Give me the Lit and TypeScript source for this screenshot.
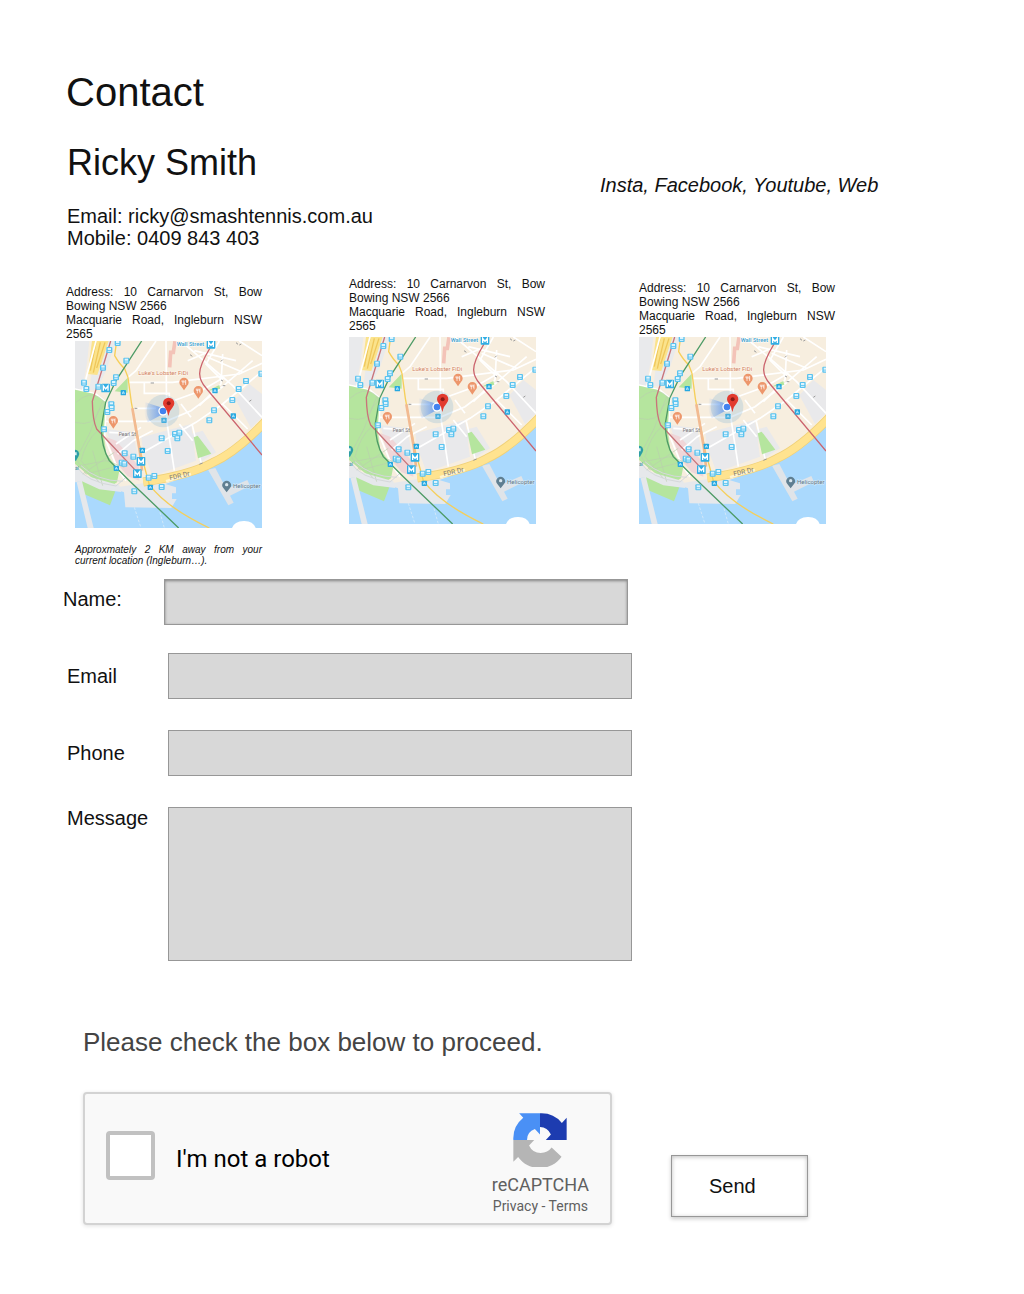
import { LitElement, html, svg, css } from "lit";
import { customElement, property } from "lit/decorators.js";

const transit: [number, number][] = [
  [185, 207], [160, 228], [211, 260], [141, 281], [84, 326], [91, 345], [127, 338], [180, 310],
  [173, 327], [166, 391], [154, 414], [167, 402], [144, 466], [570, 321], [548, 345], [529, 378],
  [474, 409], [460, 439], [317, 493], [357, 480], [370, 476], [364, 493], [335, 531], [206, 538],
  [232, 548], [197, 566], [205, 569], [278, 611], [295, 606], [235, 652], [317, 639], [616, 299],
];
const stops: [number, number][] = [
  [202, 356], [324, 439], [477, 350], [532, 426], [259, 529], [181, 583], [283, 640],
];
const metros: [number, number][] = [[465, 211], [149, 342], [255, 562], [244, 599]];
const venues: [number, number][] = [[384, 326], [427, 351], [172, 441]];

@customElement("location-map")
export class LocationMap extends LitElement {
  static styles = css`
    :host { display: block; }
    svg { display: block; width: 100%; height: auto; }
    text { font-family: Roboto, "Liberation Sans", sans-serif; }
    .street { fill: none; stroke: #fff; stroke-width: 5; }
    .path { fill: none; stroke: #b9cfae; stroke-width: 2; }
    .quay { fill: none; stroke: #d5d8db; stroke-width: 3; }
  `;

  render() {
    return html`
      <svg viewBox="57 201 561 561" role="img" aria-label="Map of the court location">
        <rect x="57" y="201" width="561" height="561" fill="#f7eedf" />
        <path fill="#e9eaec" d="M57 201H100L94 260L80 345H57Z M145 201h35l-30 90l-30 60l-20-4l10-70z" />
        <path fill="#fbe38c" d="M108 201H158L124 303L95 300Z" />
        <path fill="none" stroke="#efc75b" stroke-width="4" d="M120 205L103 290M133 205L112 296M147 205L122 282" />
        <path fill="#e9e9eb" d="M538 376L580 330L618 360V430L585 462ZM150 465L232 475L245 550L175 545ZM256 490L405 450L420 560L290 607L262 535ZM405 480L440 470L480 535L432 565Z" />
        <path fill="#f0d6d8" d="M152 490L180 500L248 575L250 620L215 607L180 565Z" />
        <g class="street">
          <path d="M57 345L120 360L150 385L146 490L185 585L210 620" />
          <path d="M216 325H350L550 300L618 268" />
          <path d="M240 403H300M146 442H330L405 410L490 346L590 260" />
          <path d="M262 535L420 445L500 390L618 292" />
          <path d="M330 201L332 440L355 590M265 325V358H340V420M370 450L410 500" />
          <path d="M375 201L530 335L618 430M415 230L540 260M455 250L560 295M395 260L455 235" />
          <path d="M490 201L450 270L500 320M500 240L495 330L430 395M550 201L618 245" />
          <path d="M300 201L240 290L216 310M340 385L435 350L505 310M375 390L405 430" />
          <path d="M160 475L245 480M180 510L255 460M408 450L435 565M500 390L575 465" />
          <path d="M120 201L75 370M185 540L232 500L290 470" />
        </g>
        <path fill="none" stroke="#f3c3b8" stroke-width="11" d="M357 202L352 235H344L341 280" />
        <path fill="#b5e59e" d="M57 347L112 359L149 384L143 480L151 540L190 590L183 625L150 646L57 570Z" />
        <path fill="#b5e59e" d="M176 352L215 311V356ZM413 490L425 485L466 539L426 553ZM455 350L490 333L493 345Z" />
        <path fill="#aad9fd" d="M57 601L150 645L300 640L385 610L455 586L530 545L618 459V762H57Z" />
        <path fill="#b5e59e" d="M72 616L120 640L178 652L162 694L71 655Z" />
        <path fill="#e6e8eb" d="M182 640L300 622L360 640V658H348V675H362L346 702L208 700L204 655L180 646Z" />
        <path fill="#e6e8eb" d="M57 575L90 605L190 634L196 654L130 646L78 622L57 625ZM62 625L78 622L113 762H95Z" />
        <path fill="#e0e4e8" d="M456 587L478 582L511 645L574 618L582 635L522 665L533 686L517 694Z" />
        <g class="path">
          <path d="M60 385Q100 350 130 370T128 410Q115 460 57 445M140 380L100 480L60 555M125 470Q90 500 75 560L130 625" />
          <path d="M70 575L150 560L205 580M80 600L175 535M60 555L90 600L170 580M110 530L140 635" />
        </g>
        <path class="quay" d="M60 575Q90 625 180 636L210 610M75 575Q120 620 200 622" />
        <path fill="none" stroke="#e3eef7" stroke-width="2" stroke-dasharray="8 5" d="M235 700L255 762M305 690L325 762" />
        <path fill="none" stroke="#f0d179" stroke-width="27" d="M262 624Q400 604 470 566Q545 532 640 430" />
        <path fill="none" stroke="#ffe38f" stroke-width="22" d="M262 624Q400 604 470 566Q545 532 640 430" />
        <path fill="none" stroke="#fff4d0" stroke-width="8" d="M330 622L405 600" />
        <path fill="none" stroke="#f6cf5a" stroke-width="4" d="M180 215L176 245Q190 270 206 284L216 310L226 385L255 540L280 632Q330 700 460 762" />
        <path fill="none" stroke="#f2ba91" stroke-width="8" d="M229 403L252 535L258 590" />
        <path fill="none" stroke="#c9747a" stroke-width="4" d="M164 201L125 330L109 382Q110 440 122 465L244 595" />
        <path fill="none" stroke="#cb636d" stroke-width="4" d="M462 222Q430 275 431 300Q432 322 450 342L618 543" />
        <path fill="none" stroke="#4d9b66" stroke-width="4" d="M257 201L180 320L149 385L136 460Q136 520 160 560L220 620L368 762" />
        <g fill="#777" font-size="15">
          <text x="188" y="486">Pearl St</text>
          <text x="342" y="619" font-size="20" transform="rotate(-14 342 619)">FDR Dr</text>
          <text x="57" y="587" fill="#37939b">al</text>
        </g>
        <path fill="none" stroke="#999" stroke-width="3" d="M284 327h10M402 242l7 5M540 206l6 5M550 213l6-3M495 262l5-5M495 318l6 3M236 403h8M580 382l6-4M500 335h8M430 571l10-4" />
        ${transit.map(([x, y]) => svg`
          <g transform="translate(${x} ${y})">
            <rect x="-9" y="-9" width="18" height="18" rx="3" fill="#5cc3ef" />
            <rect x="-5" y="-6" width="10" height="6" fill="#dff4fd" />
            <path stroke="#dff4fd" stroke-width="3" d="M-5 4h10" />
          </g>`)}
        ${stops.map(([x, y]) => svg`
          <g transform="translate(${x} ${y})">
            <rect x="-8" y="-8" width="16" height="16" rx="2" fill="#27a8e0" />
            <path fill="none" stroke="#c9efff" stroke-width="2" d="M-3 4L0-4L3 4M-4 1h8" />
          </g>`)}
        ${metros.map(([x, y]) => svg`
          <g transform="translate(${x} ${y})">
            <rect x="-13" y="-13" width="26" height="26" rx="2" fill="#31aee4" />
            <path fill="none" stroke="#fff" stroke-width="4" d="M-7 8V-6L0 3L7-6V8" />
          </g>`)}
        ${venues.map(([x, y]) => svg`
          <g transform="translate(${x} ${y})">
            <path fill="#ed966b" d="M0 23L-9 10A14 14 0 1 1 9 10Z" />
            <path fill="none" stroke="#fff" stroke-width="2" d="M-6-7V-2H0V-7M-3-7V7M5 7V-7Q2-4 3 1H5" />
          </g>`)}
        <text x="362" y="216" font-size="17" font-weight="500" fill="#3f9fcd" stroke="#fff" stroke-width="3" paint-order="stroke">Wall Street</text>
        <text x="247" y="302" font-size="18" fill="#d08263" stroke="#fff8ee" stroke-width="3" paint-order="stroke">Luke's Lobster FiDi</text>
        <text x="531" y="643" font-size="18" fill="#667784" stroke="#d6ebfa" stroke-width="3" paint-order="stroke">Helicopter</text>
        <path fill="#607f91" d="M512 655L502 642A13 13 0 1 1 522 642Z" />
        <circle cx="512" cy="632" r="5" fill="#d9e7ef" />
        <path fill="#2c9ea5" d="M57 527A13 13 0 0 1 68 546L60 560H57Z" />
        <path fill="#d9f0f0" d="M57 535h5v9h-5z" />
        <circle cx="321" cy="411" r="49" fill="#8db9d6" opacity="0.3" />
        <defs>
          <linearGradient id="beam" x1="1" x2="0">
            <stop offset="0" stop-color="#4285f4" stop-opacity="0.7" />
            <stop offset="1" stop-color="#4285f4" stop-opacity="0" />
          </linearGradient>
        </defs>
        <path fill="url(#beam)" d="M321 402L268 385Q258 415 275 445L321 420Z" />
        <circle cx="321" cy="411" r="14" fill="#fff" />
        <circle cx="321" cy="411" r="10" fill="#4382ee" />
        <path fill="#e23a2e" d="M337 426Q335 410 326 400A17 17 0 1 1 350 400Q340 410 337 426Z" />
        <circle cx="338" cy="388" r="6" fill="#8c1a16" />
        <path fill="#fff" d="M528 762Q535 742 563 741T599 762Z" />
      </svg>
    `;
  }
}

@customElement("location-card")
export class LocationCard extends LitElement {
  static styles = css`
    :host { display: block; }
    address {
      width: 196px;
      font-style: normal;
      font-size: 12px;
      line-height: 14px;
      text-align: justify;
    }
    p { margin: 0; }
    .body { width: 187px; }
    .inset { padding-left: 9px; }
    .spaced { padding-top: 4px; }
    .note {
      padding-top: 16px;
      font-size: 10px;
      line-height: 11px;
      font-style: italic;
      text-align: justify;
    }
  `;

  @property() note = "";
  @property() variant = "";

  render() {
    return html`
      <address>
        <p>Address: 10 Carnarvon St, Bow Bowing NSW 2566</p>
        <p>Macquarie Road, Ingleburn NSW 2565</p>
      </address>
      <div class="body ${this.variant}">
        <location-map></location-map>
        ${this.note ? html`<p class="note">${this.note}</p>` : ""}
      </div>
    `;
  }
}

@customElement("app-root")
export class AppRoot extends LitElement {
  static styles = css`
    :host {
      display: block;
      background: #fff;
      color: #111;
      font-family: "Liberation Sans", Arial, sans-serif;
      font-size: 20px;
      line-height: 22px;
    }
    * { box-sizing: border-box; }
    main { padding: 69px 0; }
    h1, h2, p { margin: 0; font-weight: 400; }
    h1 { padding-left: 66px; font-size: 40px; line-height: 46px; }
    .intro {
      display: grid;
      grid-template-columns: 533fr 424fr;
      padding: 27px 0 0 67px;
    }
    h2 { font-size: 36px; line-height: 42px; }
    .details { padding-top: 21px; }
    .social { padding-top: 32px; font-style: italic; }
    .locations {
      display: grid;
      grid-template-columns: 283fr 290fr 385fr;
      padding: 28px 0 0 66px;
    }
    .low { padding-top: 8px; }
    .mid { padding-top: 4px; }
    form { padding-top: 13px; }
    .row {
      display: flex;
      align-items: center;
      padding: 0 32px 0 67px;
    }
    .row label { flex: 0 0 101px; }
    .lead { padding-left: 63px; }
    .lead label { padding-bottom: 6px; }
    .top { align-items: flex-start; }
    .fields {
      display: flex;
      flex-direction: column;
      gap: 31px;
      padding-top: 28px;
    }
    .field {
      flex: 1;
      min-width: 0;
      max-width: 464px;
      height: 46px;
      margin: 0;
      padding: 8px 12px;
      border: 1px solid #979797;
      border-radius: 0;
      background: #d8d8d8;
      color: inherit;
      font: inherit;
    }
    .lead .field { box-shadow: inset 0 1px 3px rgba(0, 0, 0, 0.4); }
    .area { height: 154px; resize: none; }
    .verify { padding: 66px 32px 0 83px; }
    .prompt { color: #444; font-size: 26px; line-height: 30px; }
    .actions {
      display: flex;
      align-items: flex-end;
      gap: 59px;
      padding-top: 35px;
    }
    .captcha {
      flex: 1;
      max-width: 529px;
      display: flex;
      align-items: center;
      justify-content: space-between;
      padding: 19px 21px 7px;
      border: 2px solid #d3d3d3;
      border-radius: 4px;
      background: #f9f9f9;
      box-shadow: 0 1px 4px rgba(0, 0, 0, 0.12);
      font-family: Roboto, sans-serif;
    }
    .check {
      display: flex;
      align-items: center;
      gap: 21px;
      padding-bottom: 19px;
      color: #000;
      font-size: 24px;
      line-height: 28px;
    }
    .check span { padding-top: 8px; }
    .check input {
      appearance: none;
      width: 49px;
      height: 49px;
      margin: 0;
      border: 4px solid #c1c1c1;
      border-radius: 4px;
      background: #fff;
    }
    .check input:checked { background: #4a90e2; }
    .brand {
      display: flex;
      flex-direction: column;
      align-items: center;
      color: #606060;
      font-size: 18px;
      line-height: 22px;
    }
    .brand svg { width: 54px; height: 54px; margin-bottom: 7px; }
    .legal { font-size: 14px; line-height: 20px; }
    .legal a { color: inherit; text-decoration: none; }
    .send {
      height: 62px;
      margin: 0 0 8px;
      padding: 0 51px 0 37px;
      border: 1px solid #979797;
      border-radius: 0;
      background: #fff;
      color: inherit;
      font: inherit;
      box-shadow: 0 2px 4px rgba(0, 0, 0, 0.2), inset 0 1px 4px rgba(0, 0, 0, 0.25);
    }
  `;

  render() {
    return html`
      <main>
        <h1>Contact</h1>
        <section class="intro">
          <div>
            <h2>Ricky Smith</h2>
            <div class="details">
              <p>Email: ricky@smashtennis.com.au</p>
              <p>Mobile: 0409 843 403</p>
            </div>
          </div>
          <p class="social">Insta, Facebook, Youtube, Web</p>
        </section>

        <section class="locations">
          <location-card
            class="low"
            variant="inset"
            note="Approxmately 2 KM away from your current location (Ingleburn…)."
          ></location-card>
          <location-card variant="spaced"></location-card>
          <location-card class="mid"></location-card>
        </section>

        <form @submit=${(e: Event) => e.preventDefault()}>
          <div class="row lead">
            <label for="name">Name:</label>
            <input class="field" id="name" type="text" />
          </div>
          <div class="fields">
            <div class="row">
              <label for="email">Email</label>
              <input class="field" id="email" type="email" />
            </div>
            <div class="row">
              <label for="phone">Phone</label>
              <input class="field" id="phone" type="tel" />
            </div>
            <div class="row top">
              <label for="message">Message</label>
              <textarea class="field area" id="message"></textarea>
            </div>
          </div>

          <div class="verify">
            <p class="prompt">Please check the box below to proceed.</p>
            <div class="actions">
              <div class="captcha">
                <label class="check" for="robot">
                  <input id="robot" type="checkbox" />
                  <span>I'm not a robot</span>
                </label>
                <div class="brand">
                  <svg viewBox="17 14 158 158" aria-hidden="true">
                    <path fill="#4a90f5" d="M18 93A78 78 0 0 1 47 28L35 15H96V77L81 61Q58 69 58 93Z" />
                    <path fill="#1d3cb0" d="M96 15A78 78 0 0 1 160 43L174 28V93H113L128 77Q118 55 96 55Z" />
                    <path fill="#b5b5b5" d="M18 93H79L64 109Q74 131 98 131Q119 130 130 115L159 142A78 78 0 0 1 32 143L18 157Z" />
                  </svg>
                  <span>reCAPTCHA</span>
                  <span class="legal"><a href="#privacy">Privacy</a> - <a href="#terms">Terms</a></span>
                </div>
              </div>
              <button class="send" type="submit">Send</button>
            </div>
          </div>
        </form>
      </main>
    `;
  }
}
